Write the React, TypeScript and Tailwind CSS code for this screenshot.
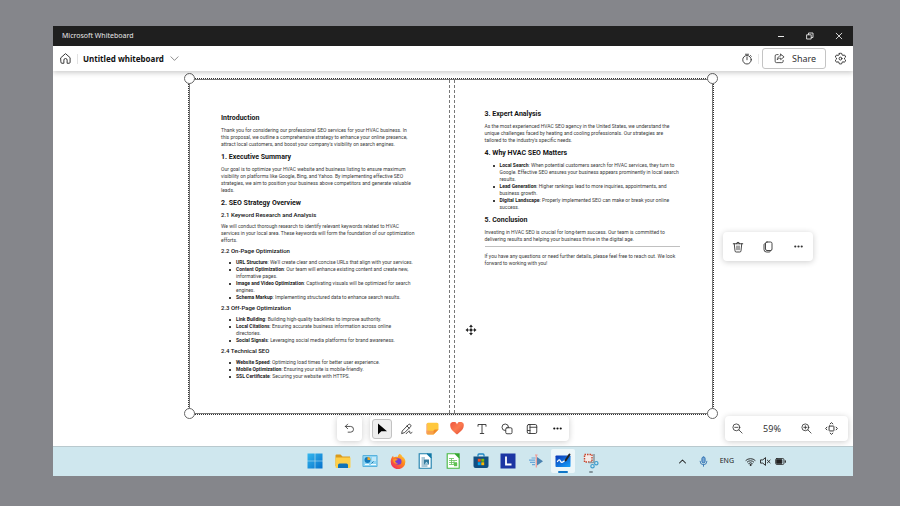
import React, { ReactNode } from "react";

function Icon({ children, className = "size-3", box = 24 }: { children: ReactNode; className?: string; box?: number }) {
  return (
    <svg
      viewBox={`0 0 ${box} ${box}`}
      className={className}
      fill="none"
      stroke="currentColor"
      strokeWidth="1.8"
      strokeLinecap="round"
      strokeLinejoin="round"
      aria-hidden="true"
    >
      {children}
    </svg>
  );
}

function IconButton({ label, children, className = "" }: { label: string; children: ReactNode; className?: string }) {
  return (
    <button type="button" aria-label={label} className={`flex items-center justify-center ${className}`}>
      {children}
    </button>
  );
}

/* Document text */

function H2({ children }: { children: ReactNode }) {
  return <h2 className="mt-[5px] mb-1 text-[7px] leading-[9px] font-bold text-[#151515] first:mt-0">{children}</h2>;
}

function H3({ children }: { children: ReactNode }) {
  return <h3 className="mt-1 mb-[5px] text-[6px] leading-[6px] font-medium text-[#111]">{children}</h3>;
}

function Lines({ lines }: { lines: string[] }) {
  return (
    <>
      {lines.map((line) => (
        <span key={line} className="block whitespace-nowrap">
          {line}
        </span>
      ))}
    </>
  );
}

function P({ lines }: { lines: string[] }) {
  return (
    <p>
      <Lines lines={lines} />
    </p>
  );
}

function Bullets({ items }: { items: [string, string[]][] }) {
  return (
    <ul className="pl-[15px]">
      {items.map(([term, [first, ...rest]]) => (
        <li key={term} className="relative">
          <span className="absolute top-[3px] -left-[7px] size-[2px] rounded-full bg-black" />
          <span className="block whitespace-nowrap">
            <b className="font-bold text-[#222]">{term}</b>: {first}
          </span>
          <Lines lines={rest} />
        </li>
      ))}
    </ul>
  );
}

function PageOne() {
  return (
    <article className="flex-1 border-r border-dashed border-[#777] pt-[34px] pl-[31px]">
      <H2>Introduction</H2>
      <P
        lines={[
          "Thank you for considering our professional SEO services for your HVAC business. In",
          "this proposal, we outline a comprehensive strategy to enhance your online presence,",
          "attract local customers, and boost your company's visibility on search engines.",
        ]}
      />
      <H2>1. Executive Summary</H2>
      <P
        lines={[
          "Our goal is to optimize your HVAC website and business listing to ensure maximum",
          "visibility on platforms like Google, Bing, and Yahoo. By implementing effective SEO",
          "strategies, we aim to position your business above competitors and generate valuable",
          "leads.",
        ]}
      />
      <H2>2. SEO Strategy Overview</H2>
      <H3>2.1 Keyword Research and Analysis</H3>
      <P
        lines={[
          "We will conduct thorough research to identify relevant keywords related to HVAC",
          "services in your local area. These keywords will form the foundation of our optimization",
          "efforts.",
        ]}
      />
      <H3>2.2 On-Page Optimization</H3>
      <Bullets
        items={[
          ["URL Structure", ["We'll create clear and concise URLs that align with your services."]],
          ["Content Optimization", ["Our team will enhance existing content and create new,", "informative pages."]],
          ["Image and Video Optimization", ["Captivating visuals will be optimized for search", "engines."]],
          ["Schema Markup", ["Implementing structured data to enhance search results."]],
        ]}
      />
      <H3>2.3 Off-Page Optimization</H3>
      <Bullets
        items={[
          ["Link Building", ["Building high-quality backlinks to improve authority."]],
          ["Local Citations", ["Ensuring accurate business information across online", "directories."]],
          ["Social Signals", ["Leveraging social media platforms for brand awareness."]],
        ]}
      />
      <H3>2.4 Technical SEO</H3>
      <Bullets
        items={[
          ["Website Speed", ["Optimizing load times for better user experience."]],
          ["Mobile Optimization", ["Ensuring your site is mobile-friendly."]],
          ["SSL Certificate", ["Securing your website with HTTPS."]],
        ]}
      />
    </article>
  );
}

function PageTwo() {
  return (
    <article className="flex-1 border-l border-dashed border-[#777] pt-[30px] pl-[30px]">
      <H2>3. Expert Analysis</H2>
      <P
        lines={[
          "As the most experienced HVAC SEO agency in the United States, we understand the",
          "unique challenges faced by heating and cooling professionals. Our strategies are",
          "tailored to the industry's specific needs.",
        ]}
      />
      <H2>4. Why HVAC SEO Matters</H2>
      <Bullets
        items={[
          [
            "Local Search",
            [
              "When potential customers search for HVAC services, they turn to",
              "Google. Effective SEO ensures your business appears prominently in local search",
              "results.",
            ],
          ],
          ["Lead Generation", ["Higher rankings lead to more inquiries, appointments, and", "business growth."]],
          ["Digital Landscape", ["Properly implemented SEO can make or break your online", "success."]],
        ]}
      />
      <H2>5. Conclusion</H2>
      <P
        lines={[
          "Investing in HVAC SEO is crucial for long-term success. Our team is committed to",
          "delivering results and helping your business thrive in the digital age.",
        ]}
      />
      <hr className="mt-[3px] mr-8 mb-[6px] border-[#c0c0c0]" />
      <P
        lines={[
          "If you have any questions or need further details, please feel free to reach out. We look",
          "forward to working with you!",
        ]}
      />
    </article>
  );
}

function Handle({ className }: { className: string }) {
  return <span className={`absolute size-[11px] rounded-full border border-[#666] bg-white ${className}`} />;
}

/* Window parts */

function TitleBar() {
  return (
    <header className="flex h-5 items-center bg-[#1f1f1f] pl-[9px] text-[#e8e8e8]">
      <span className="flex-1 text-[7px]">Microsoft Whiteboard</span>
      <IconButton label="Minimize" className="w-[29px]">
        <Icon className="size-2" box={8}>
          <path d="M1 4.500h6" strokeWidth="1" strokeLinecap="butt" />
        </Icon>
      </IconButton>
      <IconButton label="Restore" className="w-[29px]">
        <Icon className="size-2" box={8}>
          <path d="M1 2.800h4.200V7H1zM2.500 2.500V1H7v4.500H5.500" strokeWidth="0.900" />
        </Icon>
      </IconButton>
      <IconButton label="Close" className="w-[29px]">
        <Icon className="size-2" box={8}>
          <path d="M1.200 1.200l5.600 5.600M6.800 1.200L1.200 6.800" strokeWidth="0.900" />
        </Icon>
      </IconButton>
    </header>
  );
}

function BoardHeader() {
  return (
    <div className="relative z-10 flex h-[25px] items-center bg-white pl-[6px] text-[#333] shadow-[0_2px_5px_rgba(0,0,0,0.2)] [clip-path:inset(0_0_-10px_0)]">
      <IconButton label="Home" className="size-[13px]">
        <Icon className="size-[13px]">
          <path d="M3.500 10.500 12 3l8.500 7.500V19a1.800 1.800 0 0 1-1.800 1.800H15V15a3 3 0 0 0-6 0v5.800H5.300A1.800 1.800 0 0 1 3.500 19z" />
        </Icon>
      </IconButton>
      <span className="mr-[5px] ml-[5px] h-[10px] w-px bg-[#e2e2e2]" />
      <button type="button" className="flex items-center gap-[6px] text-[8px] font-bold text-[#111]">
        Untitled whiteboard
        <Icon className="size-[9px] text-[#555]">
          <path d="M2.500 7.500 12 17l9.500-9.500" />
        </Icon>
      </button>
      <span className="flex-1" />
      <IconButton label="Timer" className="size-3">
        <Icon className="size-3">
          <circle cx="12" cy="13.500" r="8.500" />
          <path d="M12 8v5.500M9 2.500h6M19 5l1.500 1.500" />
        </Icon>
      </IconButton>
      <span className="mr-[3px] ml-[5px] h-[10px] w-px bg-[#e8e8e8]" />
      <button
        type="button"
        className="flex h-[21px] w-16 items-center gap-[7px] rounded-[3px] border border-[#c4c4c4] bg-white pl-[11px] text-[9px]"
      >
        <Icon className="size-[11px] shrink-0">
          <path d="M9 3.500H5.500a3 3 0 0 0-3 3V18a3 3 0 0 0 3 3H17a3 3 0 0 0 3-3v-2" />
          <path d="M14.500 2.500 22 8.500l-7.500 6v-3.300c-3.500 0-5.500 1.200-7.500 3.800.3-5 3-8.500 7.500-9z" />
        </Icon>
        Share
      </button>
      <IconButton label="Settings" className="mr-[6px] ml-2 size-[13px]">
        <Icon className="size-[13px]">
          <path d="M9.800 2.600a10 10 0 0 1 4.400 0l.6 2.700 1.800 1 2.700-.8a10 10 0 0 1 2.200 3.800l-2.100 1.900v2l2.100 1.900a10 10 0 0 1-2.200 3.800l-2.700-.8-1.800 1-.6 2.700a10 10 0 0 1-4.400 0l-.6-2.700-1.800-1-2.700.8a10 10 0 0 1-2.200-3.800l2.100-1.900v-2L2.500 9.300a10 10 0 0 1 2.200-3.800l2.700.8 1.800-1z" />
          <circle cx="12" cy="12.200" r="2.600" />
        </Icon>
      </IconButton>
    </div>
  );
}

const floating = "absolute flex items-center rounded-[4px] bg-white text-[#333] shadow-[0_1px_6px_rgba(0,0,0,0.2)]";

function Dots({ className }: { className: string }) {
  return (
    <svg viewBox="0 0 12 12" className={className} fill="currentColor" aria-hidden="true">
      <circle cx="2.500" cy="6" r="1.200" />
      <circle cx="6" cy="6" r="1.200" />
      <circle cx="9.500" cy="6" r="1.200" />
    </svg>
  );
}

function ToolBar() {
  return (
    <div className={`${floating} bottom-[5px] left-[317px] h-[25px] gap-[5px] px-[2px]`}>
      <IconButton label="Select" className="size-5 rounded-[3px] border border-[#c2c2c2] bg-[#eeeeee]">
        <svg viewBox="0 0 12 12" className="size-3" aria-hidden="true">
          <path d="M2 .5v11l3.300-3.300H11z" fill="#000" />
        </svg>
      </IconButton>
      <IconButton label="Pen" className="size-5">
        <Icon className="size-3">
          <path d="M3 15.500 14.500 3.500a3 3 0 0 1 4.500 4L7.500 19 2 21zM12 6l4.500 4.500M10.500 21c3 0 3.500-5 6-5s-.5 4.500 2 4.500c1.200 0 2-.5 3.500-1.500" />
        </Icon>
      </IconButton>
      <IconButton label="Notes" className="size-5">
        <svg viewBox="0 0 13 13" className="size-[13px]" aria-hidden="true">
          <path d="M2 .8h9a1.500 1.500 0 0 1 1.500 1.500V7.500L7.500 12.500H2A1.500 1.500 0 0 1 .5 11V2.300A1.500 1.500 0 0 1 2 .8z" fill="#ffc83d" />
          <path d="M.5 8.500V11A1.500 1.500 0 0 0 2 12.500h5.500L8 9z" fill="#f7a04b" />
          <path d="M12.500 7.500H9A1.500 1.500 0 0 0 7.500 9v3.500z" fill="#f08a2c" />
          <path d="M.8 2v9" stroke="#f5a3a0" strokeWidth=".7" />
        </svg>
      </IconButton>
      <IconButton label="Reactions" className="size-5">
        <svg viewBox="0 0 14 13" className="h-[13px] w-[14px]" aria-hidden="true">
          <defs>
            <linearGradient id="heart" x1="0" y1="0" x2="1" y2="1">
              <stop offset="0" stopColor="#ee5540" />
              <stop offset="0.500" stopColor="#fb7a4f" />
              <stop offset="1" stopColor="#df4a35" />
            </linearGradient>
          </defs>
          <path d="M7 12.500C4.500 10.500.3 7.500.3 4A3.400 3.400 0 0 1 7 2.500 3.400 3.400 0 0 1 13.700 4c0 3.500-4.200 6.500-6.700 8.500z" fill="url(#heart)" />
        </svg>
      </IconButton>
      <IconButton label="Text" className="size-5">
        <Icon className="size-3">
          <path d="M4 6.500V3h16v3.500M12 3v18M8.500 21h7" />
        </Icon>
      </IconButton>
      <IconButton label="Shapes" className="size-5">
        <Icon className="size-3">
          <circle cx="8.500" cy="8.500" r="6.500" />
          <rect x="9.500" y="9.500" width="12.500" height="12" rx="2.500" fill="white" />
        </Icon>
      </IconButton>
      <IconButton label="Templates" className="size-5">
        <Icon className="size-3">
          <rect x="2.500" y="3" width="19" height="18" rx="3" />
          <path d="M8 3v18M8 8.500h13.500M3 15h5" />
        </Icon>
      </IconButton>
      <IconButton label="More tools" className="size-5 text-[#111]">
        <Dots className="size-[11px]" />
      </IconButton>
    </div>
  );
}

function ZoomBar() {
  return (
    <div className={`${floating} right-[5px] bottom-[5px] h-[25px] w-[123px] px-[6px]`}>
      <IconButton label="Zoom out" className="size-[13px]">
        <Icon className="size-[11px]">
          <circle cx="9.500" cy="9.500" r="7.500" />
          <path d="M15 15l7 7M6 9.500h7" />
        </Icon>
      </IconButton>
      <span className="flex-1 text-center text-[9px]">59%</span>
      <IconButton label="Zoom in" className="size-[13px]">
        <Icon className="size-[11px]">
          <circle cx="9.500" cy="9.500" r="7.500" />
          <path d="M15 15l7 7M6 9.500h7M9.500 6v7" />
        </Icon>
      </IconButton>
      <IconButton label="Fit to screen" className="ml-2 size-[21px]">
        <Icon className="size-[13px]">
          <rect x="7.500" y="7.500" width="9" height="9" rx="1" />
          <path d="M9.500 3.500 12 1.200l2.500 2.300M9.500 20.500l2.500 2.300 2.500-2.300M3.500 9.500 1.200 12l2.300 2.500M20.500 9.500l2.300 2.500-2.300 2.500" />
        </Icon>
      </IconButton>
    </div>
  );
}

function SelectionMenu() {
  return (
    <div className={`${floating} top-[161px] left-[670px] h-[29px] w-[90px] justify-around`}>
      <IconButton label="Delete" className="size-5">
        <Icon className="size-3">
          <path d="M2.500 5.500h19M9 5.500a3 3 0 0 1 6 0M4.500 5.500 6 19.500A2.500 2.500 0 0 0 8.500 22h7a2.500 2.500 0 0 0 2.500-2.500l1.500-14M10 10v7.500M14 10v7.500" />
        </Icon>
      </IconButton>
      <IconButton label="Copy" className="size-5">
        <Icon className="size-3">
          <rect x="7" y="2" width="13" height="17" rx="3" />
          <path d="M7 4.500C5 5 4 6 4 8v9a5 5 0 0 0 5 5h5c1.800 0 3-1 3.500-3" />
        </Icon>
      </IconButton>
      <IconButton label="More options" className="size-5">
        <Dots className="size-[11px]" />
      </IconButton>
    </div>
  );
}

function Board() {
  return (
    <main className="relative flex-1 overflow-hidden bg-white">
      <section
        aria-label="Selected document"
        className="absolute top-[8px] left-[136px] flex h-[335px] w-[524px] gap-1 border border-[#777] font-['Roboto',sans-serif] text-[5px] leading-[7px] text-[#3a3a3a] outline-1 outline-dotted outline-[#333]"
      >
        <PageOne />
        <PageTwo />
        <Handle className="-top-[7px] -left-[6px]" />
        <Handle className="-top-[7px] -right-[6px]" />
        <Handle className="-bottom-[6px] -left-[6px]" />
        <Handle className="-right-[6px] -bottom-[6px]" />
      </section>
      <svg viewBox="0 0 12 12" className="absolute top-[253px] left-[412px] size-3" aria-hidden="true">
        <path d="M6 .5 7.900 3H4.100zM6 11.500 7.900 9H4.100zM.5 6 3 4.100v3.800zM11.500 6 9 4.100v3.800z" fill="#222" />
        <path d="M6 2v8M2 6h8" stroke="#222" strokeWidth="0.800" />
        <circle cx="6" cy="6" r="1.200" fill="#222" />
      </svg>
      <SelectionMenu />
      <div className={`${floating} bottom-[5px] left-[284px] h-[25px] w-[25px] justify-center`}>
        <IconButton label="Undo" className="size-5">
          <Icon className="size-[11px]">
            <path d="M8 2.500 3 7.500l5 5M3 7.500h11.500a6.200 6.200 0 0 1 0 12.500H9" />
          </Icon>
        </IconButton>
      </div>
      <ToolBar />
      <ZoomBar />
    </main>
  );
}

/* Taskbar */

function AppButton({ label, children, active = false, running = false }: { label: string; children: ReactNode; active?: boolean; running?: boolean }) {
  return (
    <button
      type="button"
      aria-label={label}
      className={`relative flex size-6 items-center justify-center rounded-[2px] ${active ? "bg-[#ecf6f9]" : ""}`}
    >
      <svg viewBox="0 0 16 16" className="size-4" aria-hidden="true">
        {children}
      </svg>
      {active && <span className="absolute bottom-0 h-[2px] w-[10px] rounded-full bg-[#0f76c6]" />}
      {running && <span className="absolute bottom-0 h-[2px] w-1 rounded-full bg-[#83949b]" />}
    </button>
  );
}

function TaskApps() {
  return (
    <nav aria-label="Apps" className="absolute left-[250px] flex w-[300px] justify-between">
      <AppButton label="Start">
        <defs>
          <linearGradient id="win" x1="0" y1="0" x2="1" y2="1">
            <stop offset="0" stopColor="#35b8ee" />
            <stop offset="1" stopColor="#0671cc" />
          </linearGradient>
        </defs>
        <path d="M.5 .5h7.200v7.200H.5zM8.300 .5h7.200v7.200H8.300zM.5 8.300h7.200v7.200H.5zM8.300 8.300h7.200v7.200H8.300z" fill="url(#win)" />
      </AppButton>
      <AppButton label="File Explorer">
        <path d="M.5 2.500A1 1 0 0 1 1.500 1.500h4L7.500 3.500H15V13H.5z" fill="#d99a1c" />
        <path d="M.5 4.500h15V14a1 1 0 0 1-1 1h-13a1 1 0 0 1-1-1z" fill="#ffcf48" />
        <path d="M3 15v-3a1.500 1.500 0 0 1 1.500-1.500h7A1.500 1.500 0 0 1 13 12v3z" fill="#1272b6" />
      </AppButton>
      <AppButton label="Control Panel">
        <rect x=".5" y="2" width="15" height="12" rx="1" fill="#4ba9d8" />
        <rect x="1.300" y="2.800" width="13.400" height="10.400" fill="#8fd5f3" />
        <circle cx="5.500" cy="7" r="3" fill="#137bbd" />
        <path d="M5.500 7V4a3 3 0 0 1 3 3z" fill="#f5a623" />
        <path d="M10 5h4M10 7h4M3 11.500h4M9 11.500h5" stroke="#fff" strokeWidth=".9" />
        <path d="M9.500 10.500l2-2" stroke="#1f6f9f" strokeWidth=".9" />
      </AppButton>
      <AppButton label="Firefox">
        <defs>
          <linearGradient id="fox" x1="1" y1="0" x2="0.200" y2="1">
            <stop offset="0" stopColor="#ffe14a" />
            <stop offset="0.450" stopColor="#ff8a1c" />
            <stop offset="1" stopColor="#f0275f" />
          </linearGradient>
        </defs>
        <path d="M9.500 .8c2 1 2.500 2.200 2.900 3 1.800.8 3 2.700 3 5a7.300 7.300 0 0 1-14.700 0c0-2.500.8-4.200 2.400-6l.5 1.700C5 3.500 6.500 3.500 7.800 4 8 2.800 8.500 1.500 9.500 .8z" fill="url(#fox)" />
        <circle cx="8.200" cy="8.500" r="3.300" fill="#7a3ccf" />
        <path d="M3 6.500c2-1 4-.5 5 .5-1 0-1.700.7-3 .8.2 1.600 1.500 2.700 3 2.500-2.500 1.500-5-.5-5-3.800z" fill="#ff9b22" />
      </AppButton>
      <AppButton label="LibreOffice Writer">
        <path d="M2.200 .8h8l4 4v10.400h-12z" fill="#fff" stroke="#1c7fac" strokeWidth="1.100" />
        <path d="M9.500 .3H14.700V5.500z" fill="#1277a5" />
        <path d="M4.500 5h3.500M4.500 7h3M4.500 9h3M4.500 11h3M4.500 13h6" stroke="#4386a8" strokeWidth=".9" />
        <path d="M7 6.500h5v5H7z" fill="#347b9f" />
        <path d="M7.600 10.800l1.900-2 1.800 2z" fill="#b8e1f0" />
      </AppButton>
      <AppButton label="LibreOffice Calc">
        <path d="M2.200 .8h8l4 4v10.400h-12z" fill="#fff" stroke="#46b83f" strokeWidth="1.100" />
        <path d="M9.500 .3H14.700V5.500z" fill="#36a52f" />
        <path d="M4 5.500h5M4 7.500h8M4 9.500h8M4 11.500h8M6.500 5.500v6M9 7.500v4" stroke="#65bf5b" strokeWidth=".8" />
        <path d="M9 10h3.200v3.200H9z" fill="#5fc151" />
      </AppButton>
      <AppButton label="Microsoft Store">
        <path d="M5 3.500V2a1 1 0 0 1 1-1h4a1 1 0 0 1 1 1v1.500" fill="none" stroke="#1d87c5" strokeWidth="1.300" />
        <path d="M.5 3.500h15V13a2 2 0 0 1-2 2h-11a2 2 0 0 1-2-2z" fill="#114f82" />
        <path d="M4.800 5.800h2.900v2.900H4.800z" fill="#f25022" />
        <path d="M8.300 5.800h2.900v2.900H8.300z" fill="#7fba00" />
        <path d="M4.800 9.300h2.900v2.900H4.800z" fill="#00a4ef" />
        <path d="M8.300 9.300h2.900v2.900H8.300z" fill="#ffb900" />
      </AppButton>
      <AppButton label="L">
        <path d="M.5 .5h15v15H.5z" fill="#1c35a3" />
        <path d="M6 3.500V11.500H11.500" stroke="#fff" strokeWidth="1.800" fill="none" />
      </AppButton>
      <AppButton label="Audio tool">
        <path d="M3.500 5h4M1 7.200h6M2 9.400h5M4 11.600h3" stroke="#6ba8da" strokeWidth="1.200" />
        <path d="M9 4v8.500l6-4.200z" fill="#4a82b0" />
        <path d="M8.300 2v12.500M7 2h2.600" stroke="#ef9a94" strokeWidth="1.200" />
      </AppButton>
      <AppButton label="Whiteboard" active>
        <defs>
          <linearGradient id="board" x1="0" y1="0" x2="0.800" y2="1">
            <stop offset="0" stopColor="#0a35b5" />
            <stop offset="1" stopColor="#1599f5" />
          </linearGradient>
        </defs>
        <rect x=".5" y="2.500" width="15" height="11.500" rx=".8" fill="url(#board)" />
        <path d="M2.500 8.500C4 6 5 7 5.500 8.200s1.500 1.500 3 .3l2-1.500" stroke="#fff" strokeWidth="1.300" fill="none" strokeLinecap="round" />
        <path d="M10.500 7.500l4-6" stroke="#222" strokeWidth="2" strokeLinecap="round" />
      </AppButton>
      <AppButton label="Snipping Tool" running>
        <rect x="1.500" y="1.500" width="7.500" height="7.500" fill="#f5ebe8" stroke="#c8452c" strokeWidth="1.400" strokeDasharray="1.500 1" />
        <path d="M11 1v8.500M5.500 9.500h6" stroke="#8e9aa0" strokeWidth="1.600" />
        <circle cx="13.300" cy="10.200" r="1.700" fill="none" stroke="#3f9dcd" strokeWidth="1.200" />
        <circle cx="9.500" cy="13.200" r="1.700" fill="none" stroke="#3f9dcd" strokeWidth="1.200" />
      </AppButton>
    </nav>
  );
}

function TaskBar() {
  return (
    <footer className="relative flex h-[30px] items-center justify-end border-t border-[#b9c9ce] bg-[#cfe7ee] pr-[67px] pb-px text-[#222]">
      <TaskApps />
      <IconButton label="Show hidden icons" className="mr-[11px] size-[9px]">
        <Icon className="size-[9px]">
          <path d="M4 16l8-8 8 8" strokeWidth="2.800" />
        </Icon>
      </IconButton>
      <IconButton label="Microphone" className="mr-[11px] size-[11px]">
        <Icon className="size-[11px] text-[#2569ab]">
          <rect x="8.500" y="2" width="7" height="13" rx="3.500" fill="#79a9d6" />
          <path d="M4.500 11.500a7.500 7.500 0 0 0 15 0M12 19v3.500" />
        </Icon>
      </IconButton>
      <span className="mr-[11px] text-[7px]">ENG</span>
      <span className="flex items-center gap-[4px]">
        <Icon className="size-[11px]">
          <path d="M2 9.500a14.500 14.500 0 0 1 20 0M5 13a10 10 0 0 1 14 0M8 16.300a5.800 5.800 0 0 1 8 0" strokeWidth="2" />
          <circle cx="12" cy="19.500" r="1.300" fill="currentColor" />
        </Icon>
        <Icon className="size-[11px]">
          <path d="M2 8.500h4l6-5v17l-6-5H2zM16 9l6 6M22 9l-6 6" strokeWidth="2" />
        </Icon>
        <Icon className="size-[11px]">
          <rect x="1.500" y="5.500" width="18" height="13" rx="2.500" />
          <rect x="4" y="8" width="11" height="8" fill="currentColor" />
          <path d="M22.500 10.500v3" strokeWidth="2.500" />
        </Icon>
      </span>
    </footer>
  );
}

export default function App() {
  return (
    <div className="flex min-h-screen bg-[#85868b] pt-[26px] pr-[47px] pb-[30px] pl-[53px] font-['Noto_Sans','Open_Sans',sans-serif]">
      <div className="flex flex-1 flex-col">
        <TitleBar />
        <BoardHeader />
        <Board />
        <TaskBar />
      </div>
    </div>
  );
}
